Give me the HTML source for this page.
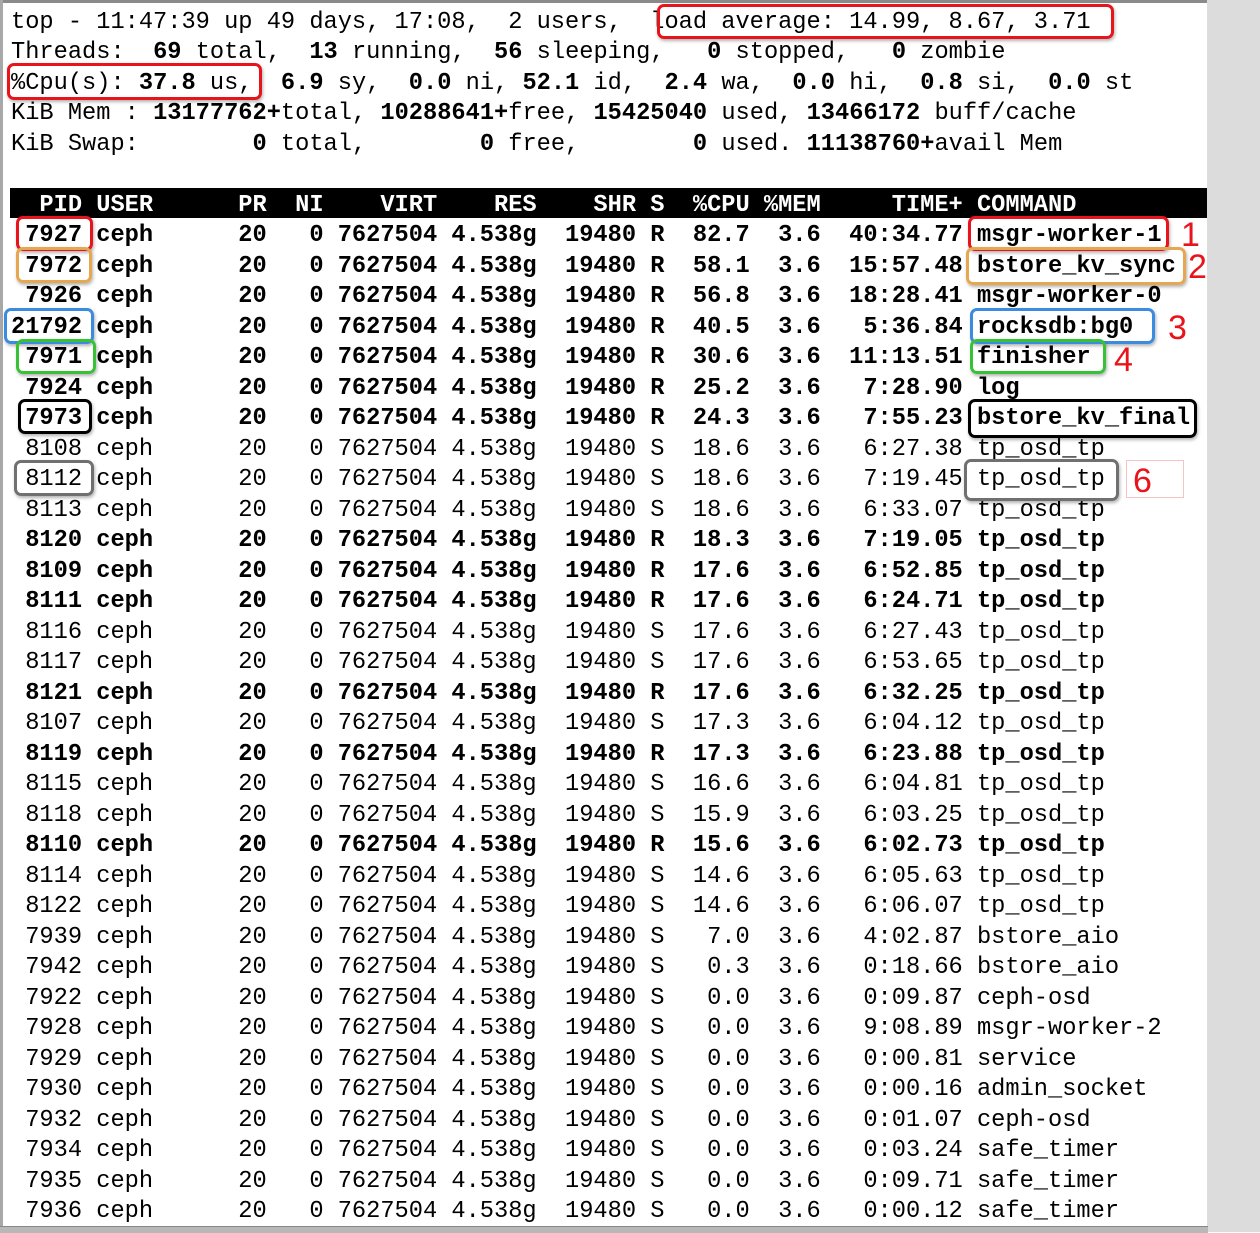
<!DOCTYPE html>
<html><head><meta charset="utf-8"><style>
html,body{margin:0;padding:0;}
body{width:1260px;height:1232px;position:relative;overflow:hidden;background:#fff;}
#topbar{position:absolute;left:0;top:0;width:1208px;height:3px;background:#8a8a8a;}
#leftbar{position:absolute;left:0;top:0;width:3px;height:1232px;background:#a8a8a8;}
#right{position:absolute;left:1207px;top:0;width:53px;height:1232px;background:#dcdcdc;}
#bottom{position:absolute;left:0;top:1226px;width:1208px;height:6px;background:#b8b8b8;border-top:1px solid #888;}
.l{position:absolute;left:11px;height:30.5px;line-height:30.5px;font-family:"Liberation Mono",monospace;font-size:23.68px;white-space:pre;color:#000;margin-top:3px;}
.l b{font-weight:bold;}
#hdr{position:absolute;left:10px;top:188px;width:1198px;height:30px;background:#000;}
.h{color:#fff;font-weight:bold;}
.bx{position:absolute;box-sizing:border-box;border:3px solid;border-radius:7px;box-shadow:1px 2px 3px rgba(0,0,0,.3);}
.n{position:absolute;font-family:"Liberation Sans",sans-serif;font-size:34px;color:#e8141c;line-height:34px;}
</style></head><body>
<div id="topbar"></div><div id="leftbar"></div>
<div id="hdr"></div>
<div class="l" style="top:4.75px">top - 11:47:39 up 49 days, 17:08,  2 users,  load average: 14.99, 8.67, 3.71</div>
<div class="l" style="top:35.25px">Threads:  <b>69</b> total,  <b>13</b> running,  <b>56</b> sleeping,   <b>0</b> stopped,   <b>0</b> zombie</div>
<div class="l" style="top:65.75px">%Cpu(s): <b>37.8</b> us,  <b>6.9</b> sy,  <b>0.0</b> ni, <b>52.1</b> id,  <b>2.4</b> wa,  <b>0.0</b> hi,  <b>0.8</b> si,  <b>0.0</b> st</div>
<div class="l" style="top:96.25px">KiB Mem : <b>13177762+</b>total, <b>10288641+</b>free, <b>15425040</b> used, <b>13466172</b> buff/cache</div>
<div class="l" style="top:126.75px">KiB Swap:        <b>0</b> total,        <b>0</b> free,        <b>0</b> used. <b>11138760+</b>avail Mem</div>
<div class="l h" style="top:187.75px">  PID USER      PR  NI    VIRT    RES    SHR S  %CPU %MEM     TIME+ COMMAND</div>
<div class="l" style="top:218.25px"><b> 7927 ceph      20   0 7627504 4.538g  19480 R  82.7  3.6  40:34.77 msgr-worker-1</b></div>
<div class="l" style="top:248.75px"><b> 7972 ceph      20   0 7627504 4.538g  19480 R  58.1  3.6  15:57.48 bstore_kv_sync</b></div>
<div class="l" style="top:279.25px"><b> 7926 ceph      20   0 7627504 4.538g  19480 R  56.8  3.6  18:28.41 msgr-worker-0</b></div>
<div class="l" style="top:309.75px"><b>21792 ceph      20   0 7627504 4.538g  19480 R  40.5  3.6   5:36.84 rocksdb:bg0</b></div>
<div class="l" style="top:340.25px"><b> 7971 ceph      20   0 7627504 4.538g  19480 R  30.6  3.6  11:13.51 finisher</b></div>
<div class="l" style="top:370.75px"><b> 7924 ceph      20   0 7627504 4.538g  19480 R  25.2  3.6   7:28.90 log</b></div>
<div class="l" style="top:401.25px"><b> 7973 ceph      20   0 7627504 4.538g  19480 R  24.3  3.6   7:55.23 bstore_kv_final</b></div>
<div class="l" style="top:431.75px"> 8108 ceph      20   0 7627504 4.538g  19480 S  18.6  3.6   6:27.38 tp_osd_tp</div>
<div class="l" style="top:462.25px"> 8112 ceph      20   0 7627504 4.538g  19480 S  18.6  3.6   7:19.45 tp_osd_tp</div>
<div class="l" style="top:492.75px"> 8113 ceph      20   0 7627504 4.538g  19480 S  18.6  3.6   6:33.07 tp_osd_tp</div>
<div class="l" style="top:523.25px"><b> 8120 ceph      20   0 7627504 4.538g  19480 R  18.3  3.6   7:19.05 tp_osd_tp</b></div>
<div class="l" style="top:553.75px"><b> 8109 ceph      20   0 7627504 4.538g  19480 R  17.6  3.6   6:52.85 tp_osd_tp</b></div>
<div class="l" style="top:584.25px"><b> 8111 ceph      20   0 7627504 4.538g  19480 R  17.6  3.6   6:24.71 tp_osd_tp</b></div>
<div class="l" style="top:614.75px"> 8116 ceph      20   0 7627504 4.538g  19480 S  17.6  3.6   6:27.43 tp_osd_tp</div>
<div class="l" style="top:645.25px"> 8117 ceph      20   0 7627504 4.538g  19480 S  17.6  3.6   6:53.65 tp_osd_tp</div>
<div class="l" style="top:675.75px"><b> 8121 ceph      20   0 7627504 4.538g  19480 R  17.6  3.6   6:32.25 tp_osd_tp</b></div>
<div class="l" style="top:706.25px"> 8107 ceph      20   0 7627504 4.538g  19480 S  17.3  3.6   6:04.12 tp_osd_tp</div>
<div class="l" style="top:736.75px"><b> 8119 ceph      20   0 7627504 4.538g  19480 R  17.3  3.6   6:23.88 tp_osd_tp</b></div>
<div class="l" style="top:767.25px"> 8115 ceph      20   0 7627504 4.538g  19480 S  16.6  3.6   6:04.81 tp_osd_tp</div>
<div class="l" style="top:797.75px"> 8118 ceph      20   0 7627504 4.538g  19480 S  15.9  3.6   6:03.25 tp_osd_tp</div>
<div class="l" style="top:828.25px"><b> 8110 ceph      20   0 7627504 4.538g  19480 R  15.6  3.6   6:02.73 tp_osd_tp</b></div>
<div class="l" style="top:858.75px"> 8114 ceph      20   0 7627504 4.538g  19480 S  14.6  3.6   6:05.63 tp_osd_tp</div>
<div class="l" style="top:889.25px"> 8122 ceph      20   0 7627504 4.538g  19480 S  14.6  3.6   6:06.07 tp_osd_tp</div>
<div class="l" style="top:919.75px"> 7939 ceph      20   0 7627504 4.538g  19480 S   7.0  3.6   4:02.87 bstore_aio</div>
<div class="l" style="top:950.25px"> 7942 ceph      20   0 7627504 4.538g  19480 S   0.3  3.6   0:18.66 bstore_aio</div>
<div class="l" style="top:980.75px"> 7922 ceph      20   0 7627504 4.538g  19480 S   0.0  3.6   0:09.87 ceph-osd</div>
<div class="l" style="top:1011.25px"> 7928 ceph      20   0 7627504 4.538g  19480 S   0.0  3.6   9:08.89 msgr-worker-2</div>
<div class="l" style="top:1041.75px"> 7929 ceph      20   0 7627504 4.538g  19480 S   0.0  3.6   0:00.81 service</div>
<div class="l" style="top:1072.25px"> 7930 ceph      20   0 7627504 4.538g  19480 S   0.0  3.6   0:00.16 admin_socket</div>
<div class="l" style="top:1102.75px"> 7932 ceph      20   0 7627504 4.538g  19480 S   0.0  3.6   0:01.07 ceph-osd</div>
<div class="l" style="top:1133.25px"> 7934 ceph      20   0 7627504 4.538g  19480 S   0.0  3.6   0:03.24 safe_timer</div>
<div class="l" style="top:1163.75px"> 7935 ceph      20   0 7627504 4.538g  19480 S   0.0  3.6   0:09.71 safe_timer</div>
<div class="l" style="top:1194.25px"> 7936 ceph      20   0 7627504 4.538g  19480 S   0.0  3.6   0:00.12 safe_timer</div>

<div class="bx" style="left:657px;top:4px;width:457px;height:35px;border-color:#e8141c"></div>
<div class="bx" style="left:7px;top:63px;width:255px;height:37px;border-color:#e8141c"></div>
<div class="bx" style="left:16px;top:216px;width:77px;height:35px;border-color:#e8141c"></div>
<div class="bx" style="left:16px;top:247px;width:76px;height:36px;border-color:#e6a752"></div>
<div class="bx" style="left:4px;top:308px;width:90px;height:36px;border-color:#3b8be0"></div>
<div class="bx" style="left:16px;top:339px;width:80px;height:35px;border-color:#36c136"></div>
<div class="bx" style="left:18px;top:399px;width:74px;height:35px;border-color:#000"></div>
<div class="bx" style="left:14px;top:460px;width:80px;height:36px;border-color:#707070"></div>
<div class="bx" style="left:968px;top:216px;width:201px;height:35px;border-color:#e8141c"></div>
<div class="bx" style="left:966px;top:247px;width:220px;height:38px;border-color:#e6a752"></div>
<div class="bx" style="left:970px;top:308px;width:185px;height:36px;border-color:#3b8be0"></div>
<div class="bx" style="left:970px;top:339px;width:136px;height:35px;border-color:#36c136"></div>
<div class="bx" style="left:968px;top:399px;width:229px;height:39px;border-color:#000"></div>
<div class="bx" style="left:964px;top:459px;width:155px;height:42px;border-color:#707070"></div>
<div style="position:absolute;left:1126px;top:460px;width:58px;height:38px;border:1px solid #f4c4c8;box-sizing:border-box"></div>
<div class="n" style="left:1181px;top:218px">1</div>
<div class="n" style="left:1188px;top:250px">2</div>
<div class="n" style="left:1168px;top:311px">3</div>
<div class="n" style="left:1114px;top:343px">4</div>
<div class="n" style="left:1211px;top:403px">5</div>
<div class="n" style="left:1133px;top:464px">6</div>
<div id="right"></div><div id="bottom"></div>
</body></html>
